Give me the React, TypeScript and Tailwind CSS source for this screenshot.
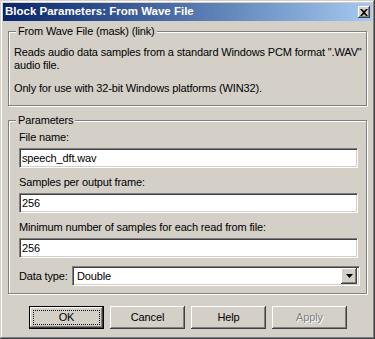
import React from 'react';

const FONT = "font-['Liberation_Sans',Arial,sans-serif]";

const sunken =
  'border border-t-[#808080] border-l-[#808080] border-b-white border-r-white shadow-[inset_1px_1px_0_#404040,inset_-1px_-1px_0_#d4d0c8]';

const raised =
  'shadow-[inset_-1px_-1px_0_#404040,inset_1px_1px_0_#ffffff,inset_-2px_-2px_0_#808080]';

function GroupBox({
  title,
  className,
  legendClass,
  children,
}: {
  title: string;
  className?: string;
  legendClass?: string;
  children: React.ReactNode;
}) {
  return (
    <fieldset
      className={`border border-[#808080] shadow-[inset_1px_1px_0_#fff,1px_1px_0_#fff] ${className ?? ''}`}
    >
      <legend className={`bg-[#d4d0c8] px-[2px] leading-[13px] ${legendClass ?? ''}`}>{title}</legend>
      {children}
    </fieldset>
  );
}

function Field({ label, value }: { label: string; value: string }) {
  return (
    <div className="flex flex-col">
      <div className="h-[13px] leading-[13px]">{label}</div>
      <div className={`mt-[4px] flex h-[20px] items-center bg-white pl-[2px] ${sunken}`}>{value}</div>
    </div>
  );
}

function Button({
  label,
  isDefault,
  disabled,
}: {
  label: string;
  isDefault?: boolean;
  disabled?: boolean;
}) {
  if (isDefault) {
    return (
      <div className="h-[23px] w-[75px] border border-black">
        <div className={`flex h-full w-full items-center justify-center p-[3px] ${raised}`}>
          <div className="flex h-full w-full items-center justify-center border border-dotted border-black">
            {label}
          </div>
        </div>
      </div>
    );
  }
  return (
    <div
      className={`flex h-[23px] w-[75px] items-center justify-center ${raised} ${
        disabled ? 'text-[#808080] [text-shadow:1px_1px_0_#fff]' : ''
      }`}
    >
      {label}
    </div>
  );
}

export default function App() {
  return (
    <div
      className={`flex h-[339px] w-[375px] flex-col bg-[#d4d0c8] p-[3px] text-[11px] tracking-[-0.15px] text-black ${FONT} shadow-[inset_-1px_-1px_0_#404040,inset_1px_1px_0_#d4d0c8,inset_-2px_-2px_0_#808080,inset_2px_2px_0_#ffffff]`}
    >
      {/* title bar */}
      <div className="flex h-[18px] items-center justify-between bg-gradient-to-r from-[#0a246a] to-[#a6caf0] pl-[2px] pr-[2px]">
        <span className="text-[11.5px] font-bold tracking-normal text-white">
          Block Parameters: From Wave File
        </span>
        <div className={`flex h-[12px] w-[12px] items-center justify-center bg-[#d4d0c8] ${raised}`}>
          <svg width="8" height="7" viewBox="0 0 8 7">
            <path d="M0 0h2l2 2 2-2h2L5 3.5 8 7H6L4 5 2 7H0l3-3.5z" fill="#000" />
          </svg>
        </div>
      </div>

      <div className="flex flex-1 flex-col px-[5px]">
        <GroupBox
          title="From Wave File (mask) (link)"
          legendClass="ml-[2px]"
          className="mt-[4px] pb-[10px] pl-[5px] pr-[1px] pt-[8px]"
        >
          <p className="whitespace-nowrap leading-[13px]">
            Reads audio data samples from a standard Windows PCM format &quot;.WAV&quot;
            <br />
            audio file.
          </p>
          <p className="mt-[10px] leading-[13px]">Only for use with 32-bit Windows platforms (WIN32).</p>
        </GroupBox>

        <GroupBox
          title="Parameters"
          legendClass="-ml-[3px]"
          className="mt-[8px] flex flex-col gap-[8px] pb-[7px] pl-[10px] pr-[8px] pt-[4px]"
        >
          <Field label="File name:" value="speech_dft.wav" />
          <Field label="Samples per output frame:" value="256" />
          <Field label="Minimum number of samples for each read from file:" value="256" />
          <div className="flex items-center">
            <span className="w-[53px]">Data type:</span>
            <div className={`-mr-[2px] flex h-[20px] flex-1 items-center bg-white pl-[4px] pr-[2px] ${sunken}`}>
              <span className="flex-1">Double</span>
              <div className={`flex h-[16px] w-[16px] items-center justify-center bg-[#d4d0c8] ${raised}`}>
                <svg width="7" height="4" viewBox="0 0 7 4">
                  <path d="M0 0h7L3.5 4z" fill="#000" />
                </svg>
              </div>
            </div>
          </div>
        </GroupBox>

        <div className="mt-[12px] flex gap-[6px] pl-[21px]">
          <Button label="OK" isDefault />
          <Button label="Cancel" />
          <Button label="Help" />
          <Button label="Apply" disabled />
        </div>
      </div>
    </div>
  );
}
